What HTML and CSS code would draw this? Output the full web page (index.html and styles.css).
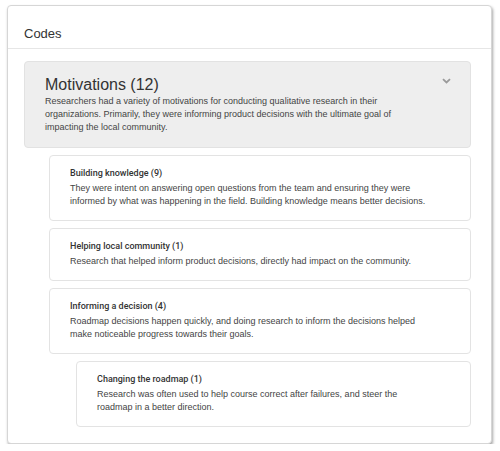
FILE: index.html
```html
<!DOCTYPE html>
<html lang="en">
<head>
<meta charset="utf-8">
<title>Codes</title>
<link rel="stylesheet" href="styles.css">
</head>
<body>
<div class="panel">
  <div class="panel-header">Codes</div>
  <div class="panel-body">
    <div class="group">
      <h2 class="group-title">Motivations (12)</h2>
      <p class="group-desc">Researchers had a variety of motivations for conducting qualitative research in their organizations. Primarily, they were informing product decisions with the ultimate goal of impacting the local community.</p>
      <svg class="chevron" width="9" height="6" viewBox="0 0 9 6"><path d="M1 1.2 L4.5 4.5 L8 1.2" fill="none" stroke="#9a9a9a" stroke-width="1.8"/></svg>
    </div>
    <div class="children">
      <div class="code">
        <div class="code-title">Building knowledge (9)</div>
        <p class="code-desc">They were intent on answering open questions from the team and ensuring they were informed by what was happening in the field. Building knowledge means better decisions.</p>
      </div>
      <div class="code">
        <div class="code-title">Helping local community (1)</div>
        <p class="code-desc">Research that helped inform product decisions, directly had impact on the community.</p>
      </div>
      <div class="code">
        <div class="code-title">Informing a decision (4)</div>
        <p class="code-desc">Roadmap decisions happen quickly, and doing research to inform the decisions helped make noticeable progress towards their goals.</p>
      </div>
      <div class="code code-nested">
        <div class="code-title">Changing the roadmap (1)</div>
        <p class="code-desc">Research was often used to help course correct after failures, and steer the roadmap in a better direction.</p>
      </div>
    </div>
  </div>
</div>
</body>
</html>
```
FILE: styles.css
```css
html, body {
  margin: 0;
  padding: 0;
  background: #ffffff;
}
body {
  font-family: "Liberation Sans", Arial, sans-serif;
  color: #333;
  padding: 5px 8px 0 7px;
}
.panel {
  width: 483px;
  background: #fff;
  border: 1px solid #d6d6d6;
  border-radius: 4px;
  box-shadow: 1px 2px 3px rgba(0,0,0,0.35);
}
.panel-header {
  height: 43px;
  box-sizing: border-box;
  padding: 20px 16px 0;
  font-size: 13px;
  line-height: 16px;
  color: #333;
  border-bottom: 1px solid #e6e6e6;
}
.panel-body {
  padding: 12px 20px 16px 16px;
  display: flex;
  flex-direction: column;
  gap: 7px;
}
.group {
  position: relative;
  background: #eeeeee;
  border: 1px solid #e2e2e2;
  border-radius: 4px;
  padding: 13px 40px 13px 20px;
}
.group-title {
  margin: 0;
  font-size: 16px;
  font-weight: normal;
  line-height: 20px;
  color: #333;
}
.group-desc {
  margin: 0;
  font-size: 9px;
  line-height: 13px;
  color: #444;
}
.chevron {
  position: absolute;
  top: 16px;
  right: 19px;
}
.children {
  display: flex;
  flex-direction: column;
  gap: 7px;
  padding-left: 25px;
}
.code {
  background: #fff;
  border: 1px solid #e3e3e3;
  border-radius: 4px;
  padding: 11px 40px 12px 20px;
}
.code-nested {
  margin-left: 27px;
}
.code-title {
  font-family: Roboto, "Liberation Sans", sans-serif;
  font-weight: 500;
  font-size: 9px;
  line-height: 13px;
  margin-bottom: 2px;
  color: #333;
}
.code-desc {
  margin: 0;
  font-size: 9px;
  line-height: 13px;
  color: #444;
}
```
